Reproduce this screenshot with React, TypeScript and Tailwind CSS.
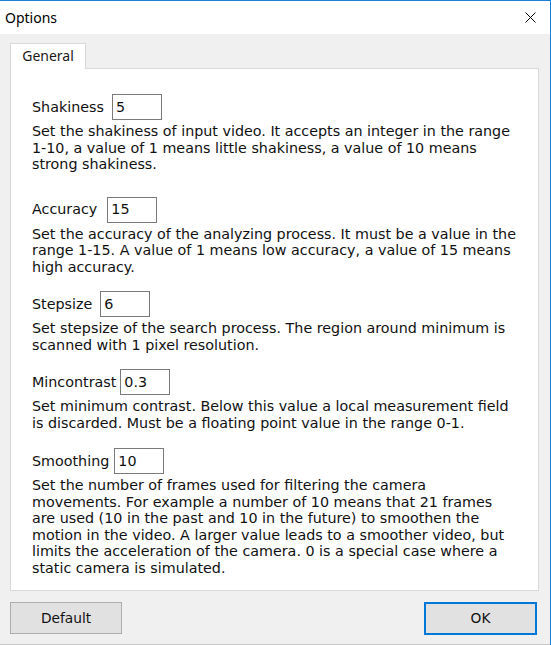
import React from "react";

const V = { fontFamily: '"DejaVu Sans", Verdana, sans-serif' };

type Sec = { label: string; value: string; lines: string[]; mt: string; gap: string };

const sections: Sec[] = [
  {
    label: "Shakiness",
    value: "5",
    mt: "mt-0",
    gap: "gap-[8px]",
    lines: [
      "Set the shakiness of input video. It accepts an integer in the range",
      "1-10, a value of 1 means little shakiness, a value of 10 means",
      "strong shakiness.",
    ],
  },
  {
    label: "Accuracy",
    value: "15",
    mt: "mt-[24px]",
    gap: "gap-[10px]",
    lines: [
      "Set the accuracy of the analyzing process. It must be a value in the",
      "range 1-15. A value of 1 means low accuracy, a value of 15 means",
      "high accuracy.",
    ],
  },
  {
    label: "Stepsize",
    value: "6",
    mt: "mt-[16px]",
    gap: "gap-[8px]",
    lines: [
      "Set stepsize of the search process. The region around minimum is",
      "scanned with 1 pixel resolution.",
    ],
  },
  {
    label: "Mincontrast",
    value: "0.3",
    mt: "mt-[16px]",
    gap: "gap-[4px]",
    lines: [
      "Set minimum contrast. Below this value a local measurement field",
      "is discarded. Must be a floating point value in the range 0-1.",
    ],
  },
  {
    label: "Smoothing",
    value: "10",
    mt: "mt-[17px]",
    gap: "gap-[5px]",
    lines: [
      "Set the number of frames used for filtering the camera",
      "movements. For example a number of 10 means that 21 frames",
      "are used (10 in the past and 10 in the future) to smoothen the",
      "motion in the video. A larger value leads to a smoother video, but",
      "limits the acceleration of the camera. 0 is a special case where a",
      "static camera is simulated.",
    ],
  },
];

export default function App() {
  return (
    <div className="w-[551px] h-[645px] flex flex-col border-t border-r border-[#1a7fd4] bg-[#f0f0f0] overflow-hidden">
      <div className="h-[33px] bg-white flex items-center justify-between pl-[5px] pr-[14px] shrink-0">
        <span className="text-[14px] text-black" style={{ fontFamily: '"Noto Sans", "Open Sans", sans-serif' }}>
          Options
        </span>
        <svg width="11" height="11" viewBox="0 0 11 11">
          <path d="M0.5 0.5 L10.5 10.5 M10.5 0.5 L0.5 10.5" stroke="#000" strokeWidth="1" />
        </svg>
      </div>
      <div className="flex-1 flex flex-col pl-[10px] pr-[11px] pt-[9px] border-b border-[#c8c8c8]">
        <div className="flex">
          <div
            className="w-[76px] h-[26px] -mb-px relative z-10 bg-white border-l border-t border-r border-[#d9d9d9] flex items-center justify-center pb-[3px] text-[14px] text-[#1a1a1a]"
            style={{ fontFamily: '"Noto Sans", "Open Sans", sans-serif' }}
          >
            General
          </div>
        </div>
        <div className="h-[523px] bg-white border border-[#d9d9d9] pl-[21px] pt-[25px] text-[14.3px] leading-[16.5px] text-[#111]" style={V}>
          {sections.map((s) => (
            <div key={s.label} className={s.mt}>
              <div className={`flex items-center ${s.gap}`}>
                <span>{s.label}</span>
                <div className="w-[50px] h-[26px] border border-[#7a7a7a] bg-white flex items-center pl-[3px]">
                  {s.value}
                </div>
              </div>
              <div className="mt-[3px] whitespace-nowrap">
                {s.lines.map((l, i) => (
                  <div key={i}>{l}</div>
                ))}
              </div>
            </div>
          ))}
        </div>
        <div className="flex justify-between items-start mt-[11px] pr-[2px]" style={V}>
          <button className="w-[112px] h-[32px] bg-[#e1e1e1] border border-[#adadad] text-[13.75px] text-[#111] flex items-center justify-center">
            Default
          </button>
          <button className="w-[113px] h-[33px] bg-[#e1e1e1] border-2 border-[#0078d7] text-[13.75px] text-[#111] flex items-center justify-center">
            OK
          </button>
        </div>
      </div>
    </div>
  );
}
